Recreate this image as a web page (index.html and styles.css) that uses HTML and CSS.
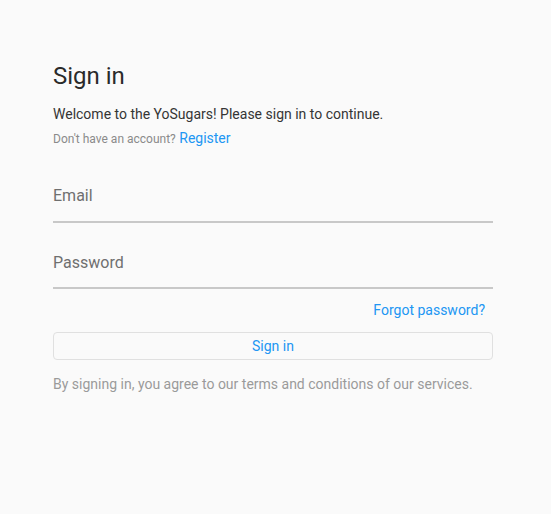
FILE: index.html
```html
<!DOCTYPE html>
<html>
<head>
<meta charset="utf-8">
<link rel="stylesheet" href="styles.css">
</head>
<body>
<main class="page">
  <h1 class="title">Sign in</h1>
  <p class="welcome">Welcome to the YoSugars! Please sign in to continue.</p>
  <p class="register-line"><span class="muted-small">Don't have an account?</span> <a class="link" href="#">Register</a></p>
  <div class="field field-email"><span class="label">Email</span></div>
  <div class="field field-password"><span class="label">Password</span></div>
  <div class="forgot-row"><a class="link" href="#">Forgot password?</a></div>
  <button class="btn">Sign in</button>
  <p class="terms">By signing in, you agree to our terms and conditions of our services.</p>
</main>
</body>
</html>
```
FILE: styles.css
```css
html, body {
  margin: 0;
  padding: 0;
  background: #fafafa;
  font-family: Roboto, "Liberation Sans", sans-serif;
}
.page {
  width: 440px;
  padding: 62px 0 0 53px;
  display: flex;
  flex-direction: column;
}
.title {
  margin: 0;
  font-size: 24px;
  line-height: 28px;
  font-weight: 400;
  color: #2a2a2a;
}
.welcome {
  margin: 14px 0 0;
  font-size: 14px;
  line-height: 20px;
  color: #353535;
}
.register-line {
  margin: 4px 0 0;
  font-size: 14px;
  line-height: 20px;
}
.muted-small {
  font-size: 12px;
  color: #8a8a8a;
}
.link {
  color: #2196f3;
  text-decoration: none;
  font-size: 14px;
}
.field {
  padding: 7px 0 13px;
  border-bottom: 2px solid #c8c8c8;
}
.field-email {
  margin-top: 28px;
}
.field-password {
  margin-top: 20px;
  padding: 8px 0 12px;
}
.label {
  display: block;
  font-size: 16px;
  line-height: 24px;
  color: #6f6f6f;
}
.forgot-row {
  margin-top: 11px;
  height: 20px;
  line-height: 20px;
  display: flex;
  justify-content: flex-end;
  padding-right: 8px;
}
.btn {
  margin-top: 12px;
  height: 28px;
  width: 440px;
  background: #fafafa;
  border: 1px solid #e0e0e0;
  border-radius: 4px;
  color: #2196f3;
  font-family: Roboto, "Liberation Sans", sans-serif;
  font-size: 14px;
  padding: 0;
}
.terms {
  margin: 14px 0 0;
  font-size: 14px;
  line-height: 20px;
  color: #9a9a9a;
}
```
